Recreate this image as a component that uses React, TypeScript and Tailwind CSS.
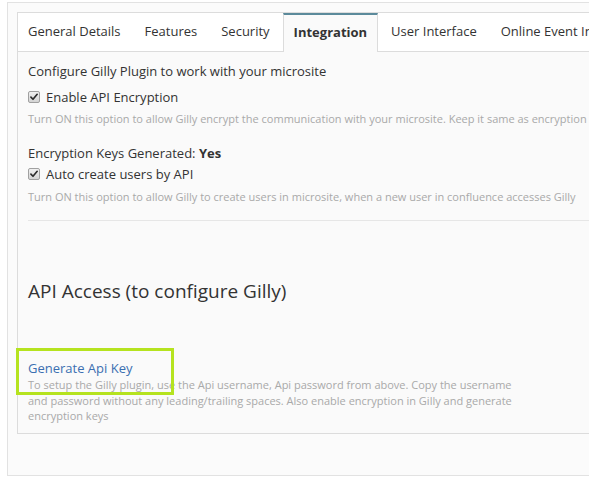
import React from "react";

function Check() {
  return (
    <span className="inline-flex h-[12px] w-[12px] shrink-0 items-center justify-center rounded-[2px] border border-[#a0a0a0] bg-gradient-to-b from-[#f0f0f0] to-[#d4d4d4]">
      <svg viewBox="0 0 12 12" className="h-[10px] w-[10px]">
        <path d="M2.3 6.2 L4.8 8.7 L9.8 2.8" fill="none" stroke="#2b2b2b" strokeWidth="2" strokeLinecap="round" strokeLinejoin="round" />
      </svg>
    </span>
  );
}

export default function App() {
  const tabs = ["General Details", "Features", "Security", "Integration", "User Interface", "Online Event Integration"];
  return (
    <div className="h-[479px] w-[589px] overflow-hidden bg-white" style={{ fontFamily: '"Open Sans", sans-serif' }}>
      <div className="ml-[7px] mt-[2px] h-[474px] w-[700px] border border-[#e2e2e2] bg-[#fbfbfb] pl-[9px] pt-[9px]">
        <div className="h-[422px] w-[680px] border border-[#dcdcdc] bg-[#fafafa]">
          <div className="flex h-[39px] border-b border-[#dcdcdc] bg-white">
            {tabs.map((t, i) =>
              i === 3 ? (
                <div key={t} className="-mb-px mr-[2px] flex h-[39px] items-center whitespace-nowrap border-x border-t-2 border-x-[#dcdcdc] border-t-[#5b8a9b] bg-[#fafafa] px-[10px] pb-[2px] text-[13px] font-bold text-[#333]">
                  {t}
                </div>
              ) : (
                <div key={t} className={`mr-[2px] flex h-[38px] items-center whitespace-nowrap ${i === 0 ? "pl-[10px] pr-[11px]" : "px-[11px]"} text-[13px] text-[#333]`}>
                  {t}
                </div>
              )
            )}
          </div>
          <div className="pl-[10px] text-[#333]">
            <div className="mt-[10px] text-[13px] leading-[18px]">Configure Gilly Plugin to work with your microsite</div>
            <label className="mt-[8px] flex items-center gap-[6px] text-[13px] leading-[18px]">
              <Check />
              <span>Enable API Encryption</span>
            </label>
            <div className="mt-[5px] whitespace-nowrap text-[11px] leading-[15px] text-[#a9a9a9]">
              Turn ON this option to allow Gilly encrypt the communication with your microsite. Keep it same as encryption key
            </div>
            <div className="mt-[18px] text-[13px] leading-[18px]">
              Encryption Keys Generated: <b>Yes</b>
            </div>
            <label className="mt-[3px] flex items-center gap-[6px] text-[13px] leading-[18px]">
              <Check />
              <span>Auto create users by API</span>
            </label>
            <div className="mt-[6px] whitespace-nowrap text-[11px] leading-[15px] text-[#a9a9a9]">
              Turn ON this option to allow Gilly to create users in microsite, when a new user in confluence accesses Gilly
            </div>
            <div className="mt-[16px] w-[630px] border-t border-[#e6e6e6]" />
            <div className="mt-[57px] text-[19px] leading-[26px] text-[#333]">API Access (to configure Gilly)</div>
            <div className="relative mt-[55px] w-[500px]">
              <div className="pointer-events-none absolute left-[-12px] top-[-11px] h-[47px] w-[158px] border-[3px] border-[#b5e31f]" />
              <div className="text-[13px] leading-[18px] text-[#3b6fb1]">Generate Api Key</div>
              <div className="text-[11px] leading-[15.5px] text-[#a9a9a9]">
                To setup the Gilly plugin, use the Api username, Api password from above. Copy the username and password without any leading/trailing spaces. Also enable encryption in Gilly and generate encryption keys
              </div>
            </div>
          </div>
        </div>
      </div>
    </div>
  );
}
